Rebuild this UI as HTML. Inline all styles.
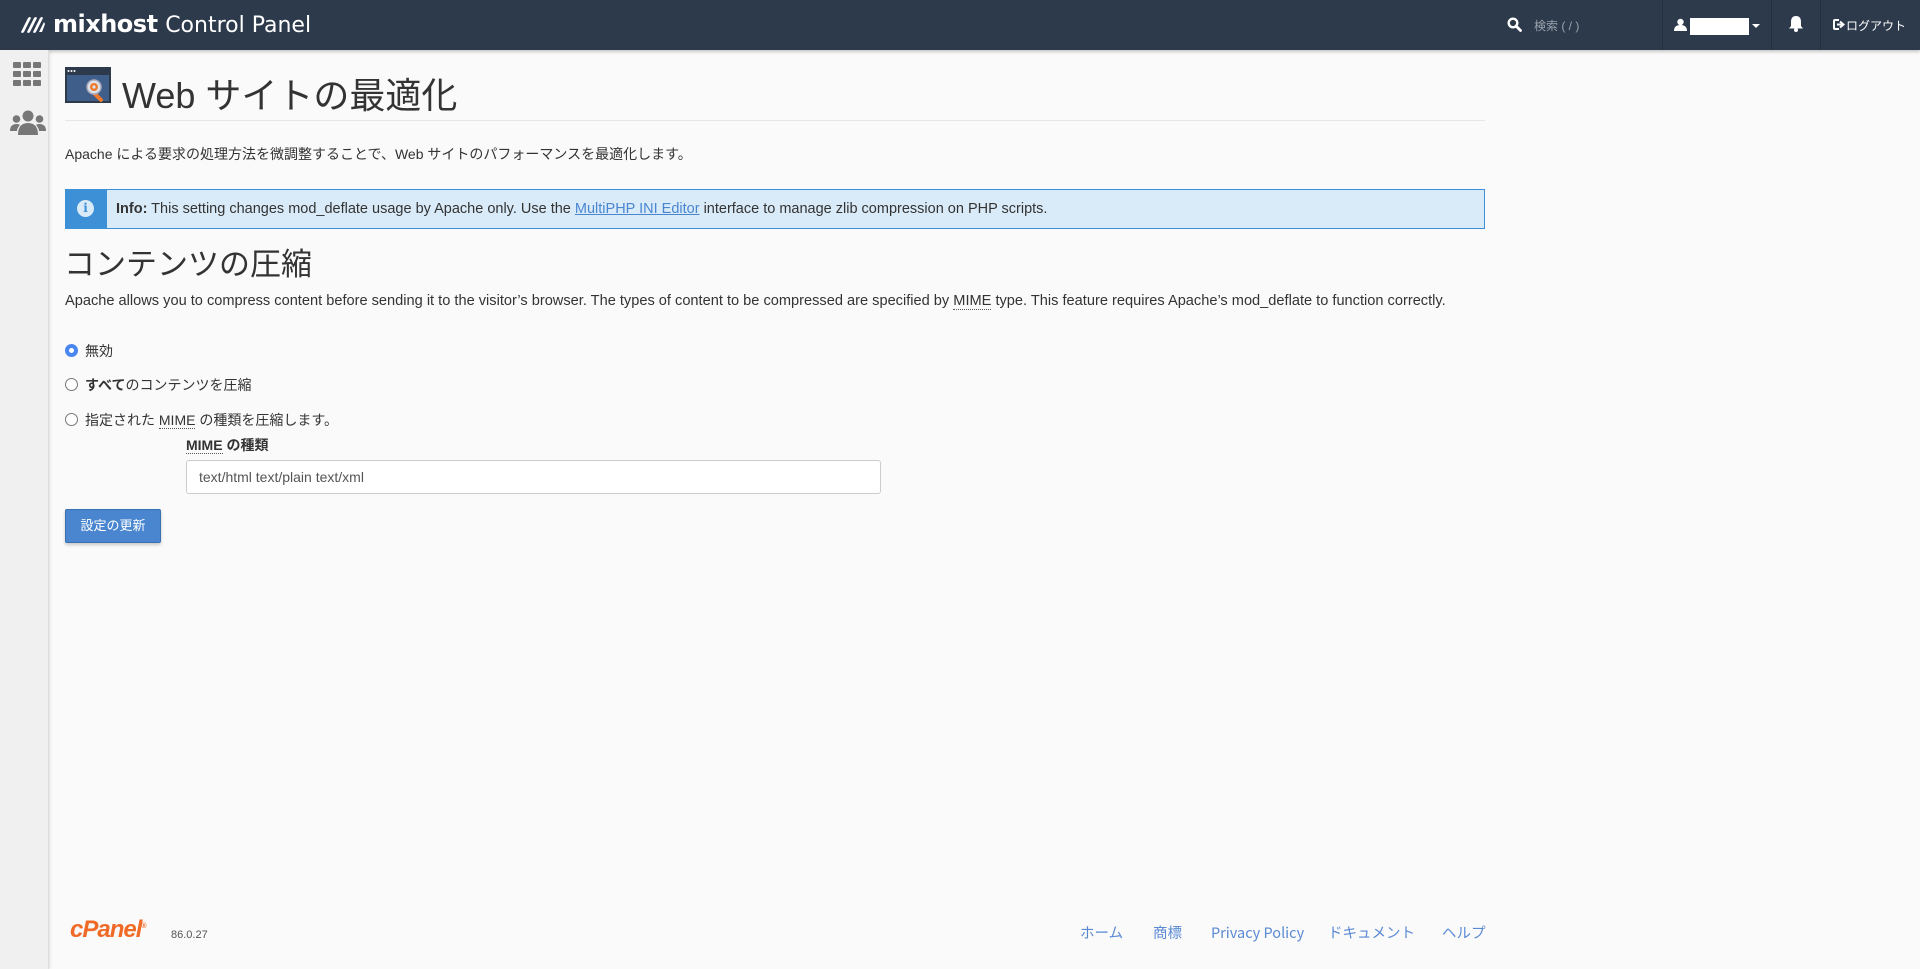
<!DOCTYPE html>
<html><head><meta charset="utf-8"><style>
*{box-sizing:border-box;margin:0;padding:0}
body{width:1920px;height:969px;background:#fafafa;font-family:"Liberation Sans","Noto Sans CJK JP",sans-serif;color:#333;position:relative;overflow:hidden;font-size:14px}
.a{position:absolute;white-space:nowrap}
#hdr{position:absolute;left:0;top:0;width:1920px;height:50px;background:#2d3a4b;box-shadow:0 2px 3px rgba(0,0,0,.2)}
#side{position:absolute;left:0;top:50px;width:49px;height:919px;background:#f0f0f0;border-right:1px solid #ddd;box-shadow:1px 0 3px rgba(0,0,0,.1)}
.sep{position:absolute;top:0;width:1px;height:50px;background:#25303e}
a{color:#4a86d0}
.fl{color:#5b8ad4;font-size:14.5px;top:922px;line-height:22px;font-family:"Noto Sans CJK JP",sans-serif}
.radio{position:absolute;left:65px;width:13px;height:13px;border:1px solid #777;border-radius:50%;background:#fff}
abbr{text-decoration:none;border-bottom:1px dotted #555}
</style></head><body>
<div id="hdr">
<svg class="a" style="left:20px;top:15px" width="26" height="20" viewBox="0 0 26 20"><g fill="#fff"><path d="M1 17 L8 3 Q10 1 11 3 L4 17 Q2 19 1 17Z"/><path d="M7 17 L14 3 Q16 1 17 3 L10 17 Q8 19 7 17Z"/><path d="M13 17 L20 3 Q22 1 23 3 L16 17 Q14 19 13 17Z"/><path d="M19 17 L24 7 L25 9 L22 17Z"/></g></svg>
<div class="a" style="left:53px;top:10px;color:#fff;font-size:24px;font-family:'DejaVu Sans','Liberation Sans',sans-serif"><b style="font-weight:bold;letter-spacing:-0.5px">mixhost</b> <span style="font-weight:normal;font-size:22px">Control Panel</span></div>
<svg class="a" style="left:1507px;top:17px" width="15" height="15" viewBox="0 0 15 15"><circle cx="6" cy="6" r="4.3" fill="none" stroke="#fff" stroke-width="2.4"/><path d="M9 9 L13.5 13.5" stroke="#fff" stroke-width="2.8" stroke-linecap="round"/></svg>
<div class="a" style="left:1534px;top:17px;color:#9aa3ad;font-size:12px">検索 ( / )</div>
<div class="sep" style="left:1662px"></div>
<svg class="a" style="left:1674px;top:18px" width="13" height="13" viewBox="0 0 13 13"><circle cx="6.5" cy="4" r="3.2" fill="#fff"/><path d="M0 13 Q0 7 6.5 7 Q13 7 13 13Z" fill="#fff"/></svg>
<div class="a" style="left:1690px;top:18px;width:59px;height:17px;background:#fff"></div>
<div class="a" style="left:1752px;top:24px;border-left:4px solid transparent;border-right:4px solid transparent;border-top:4px solid #fff"></div>
<div class="sep" style="left:1771px"></div>
<svg class="a" style="left:1789px;top:15px" width="14" height="17" viewBox="0 0 14 17"><path d="M7 1 Q12 1 12 7 L12 11 L14 13.5 L0 13.5 L2 11 L2 7 Q2 1 7 1Z" fill="#fff"/><circle cx="7" cy="15" r="2" fill="#fff"/></svg>
<div class="sep" style="left:1820px"></div>
<svg class="a" style="left:1833px;top:19px" width="12" height="11" viewBox="0 0 12 11"><path d="M6 1 H2 Q1 1 1 2 V9 Q1 10 2 10 H6" fill="none" stroke="#fff" stroke-width="2"/><path d="M4 5.5 H9 M7 2.5 L10.5 5.5 L7 8.5" fill="none" stroke="#fff" stroke-width="2"/></svg>
<div class="a" style="left:1846px;top:17px;color:#fff;font-size:12px">ログアウト</div>
</div>
<div id="side">
<svg class="a" style="left:13px;top:12px" width="29" height="24" viewBox="0 0 29 24"><g fill="#777"><rect x="0" y="0" width="8" height="6" rx="1"/><rect x="10" y="0" width="8" height="6" rx="1"/><rect x="20" y="0" width="8" height="6" rx="1"/><rect x="0" y="9" width="8" height="6" rx="1"/><rect x="10" y="9" width="8" height="6" rx="1"/><rect x="20" y="9" width="8" height="6" rx="1"/><rect x="0" y="18" width="8" height="6" rx="1"/><rect x="10" y="18" width="8" height="6" rx="1"/><rect x="20" y="18" width="8" height="6" rx="1"/></g></svg>
<svg class="a" style="left:10px;top:60px" width="36" height="26" viewBox="0 0 36 26"><g fill="#777"><circle cx="18" cy="6" r="5.5"/><circle cx="6.5" cy="9" r="3.8"/><circle cx="29.5" cy="9" r="3.8"/><path d="M8 25 Q8 13 18 13 Q28 13 28 25Z"/><path d="M0 21 Q0 14 6.5 14 Q9 14 10 15 Q7 18 7 21Z"/><path d="M36 21 Q36 14 29.5 14 Q27 14 26 15 Q29 18 29 21Z"/></g></svg>
</div>
<svg class="a" style="left:65px;top:67px" width="48" height="38" viewBox="0 0 48 38"><rect x="0" y="0" width="46" height="36" fill="#2d3a4b"/><rect x="2" y="8" width="42" height="26" fill="#3f5f8a"/><circle cx="3.5" cy="4" r="1" fill="#fff"/><circle cx="6.5" cy="4" r="1" fill="#fff"/><circle cx="9.5" cy="4" r="1" fill="#fff"/><path d="M28 25 L36 33" stroke="#f07a2c" stroke-width="4" stroke-linecap="round"/><circle cx="29" cy="20" r="7" fill="#dde3ea" stroke="#aab" stroke-width="1.5"/><circle cx="29" cy="20" r="4" fill="#f07a2c"/><circle cx="29" cy="20" r="1.6" fill="#dde3ea"/></svg>
<div class="a" style="left:122px;top:67px;font-size:36px;color:#333">Web サイトの最適化</div>
<div class="a" style="left:65px;top:120px;width:1420px;height:1px;background:#e6e6e6"></div>
<div class="a" style="left:65px;top:144px;font-size:14px">Apache による要求の処理方法を微調整することで、Web サイトのパフォーマンスを最適化します。</div>
<div class="a" style="left:65px;top:189px;width:1420px;height:40px;background:#d9ebf8;border:1px solid #3d8fd6"></div>
<div class="a" style="left:65px;top:189px;width:42px;height:40px;background:#3d8fd6"></div>
<div class="a" style="left:77px;top:200px;width:17px;height:17px;border-radius:50%;background:#d9ebf8;color:#3d8fd6;font-size:12px;font-weight:bold;text-align:center;line-height:17px;font-family:'DejaVu Serif',serif">i</div>
<div class="a" style="left:116px;top:201px;font-size:14.5px"><b>Info:</b> This setting changes mod_deflate usage by Apache only. Use the <a href="#">MultiPHP INI Editor</a> interface to manage zlib compression on PHP scripts.</div>
<div class="a" style="left:64px;top:239px;font-size:31px;color:#333">コンテンツの圧縮</div>
<div class="a" style="left:65px;top:293px;font-size:14.6px">Apache allows you to compress content before sending it to the visitor’s browser. The types of content to be compressed are specified by <abbr>MIME</abbr> type. This feature requires Apache’s mod_deflate to function correctly.</div>
<div class="radio" style="top:344px;border:4px solid #4a86f0;background:#fff"></div>
<div class="a" style="left:85px;top:341px;font-size:14px">無効</div>
<div class="radio" style="top:378px"></div>
<div class="a" style="left:85px;top:375px;font-size:14px"><b>すべて</b>のコンテンツを圧縮</div>
<div class="radio" style="top:413px"></div>
<div class="a" style="left:85px;top:410px;font-size:14px">指定された <abbr>MIME</abbr> の種類を圧縮します。</div>
<div class="a" style="left:186px;top:435px;font-size:14px;font-weight:bold"><abbr>MIME</abbr> の種類</div>
<div class="a" style="left:186px;top:460px;width:695px;height:34px;background:#fff;border:1px solid #ccc;border-radius:3px;padding:0 12px;line-height:32px;font-size:14px;color:#555">text/html text/plain text/xml</div>
<div class="a" style="left:65px;top:509px;width:96px;height:34px;background:#4a86d0;border:1px solid #3a6fb0;border-radius:2px;color:#fff;font-size:13px;text-align:center;line-height:32px;box-shadow:0 2px 3px rgba(0,0,0,.2)">設定の更新</div>
<div class="a" style="left:70px;top:916px;font-size:24px;font-weight:bold;font-style:italic;color:#f06a27;letter-spacing:-1px">cPanel<sup style="font-size:7px">®</sup></div>
<div class="a" style="left:171px;top:929px;font-size:11px;color:#555">86.0.27</div>
<div class="a fl" style="left:1080px">ホーム</div>
<div class="a fl" style="left:1153px">商標</div>
<div class="a fl" style="left:1211px">Privacy Policy</div>
<div class="a fl" style="left:1328px">ドキュメント</div>
<div class="a fl" style="left:1442px">ヘルプ</div>
</body></html>
